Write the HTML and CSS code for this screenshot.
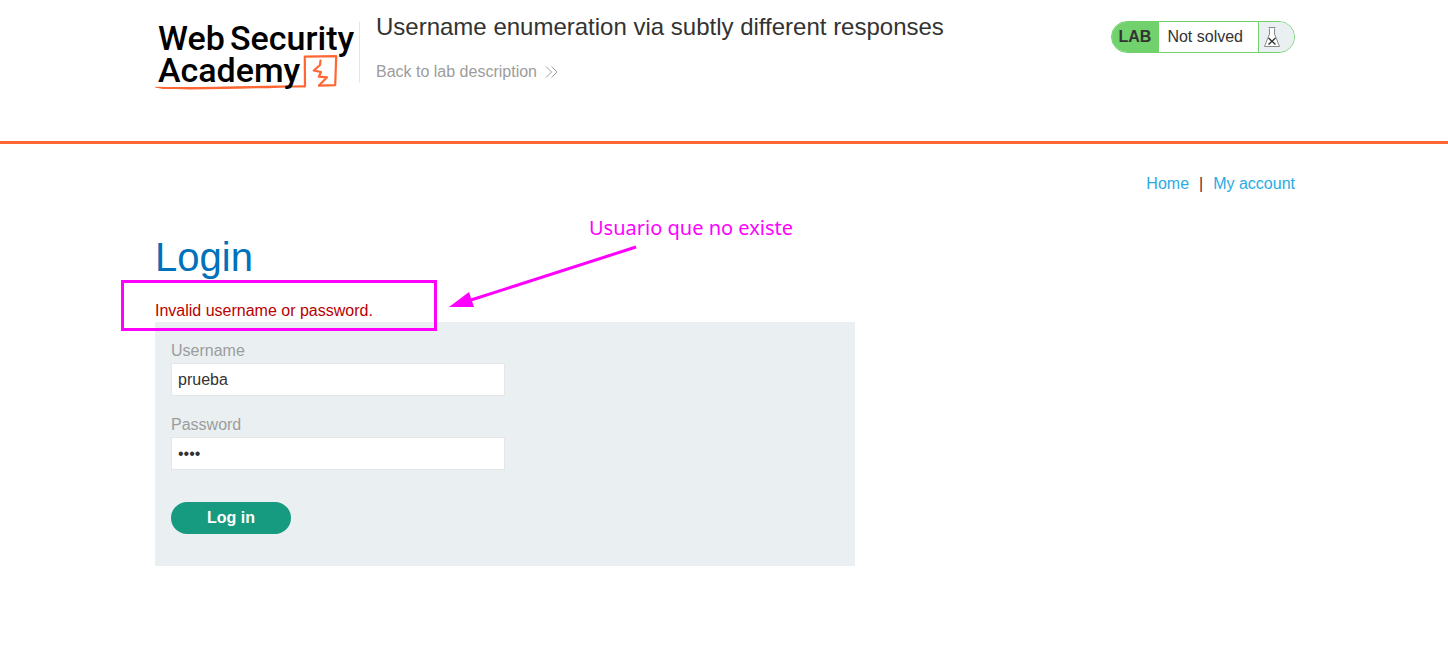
FILE: index.html
```html
<!DOCTYPE html>
<html lang="en">
<head>
<meta charset="utf-8">
<meta name="viewport" content="width=device-width, initial-scale=1">
<title>Username enumeration via subtly different responses</title>
<link rel="stylesheet" href="styles.css">
</head>
<body>
<header class="lab-header">
  <div class="container lab-header-inner">
    <a class="logo" href="#" aria-label="Web Security Academy">
      <svg width="204" height="76" viewBox="0 0 204 76">
        <path fill="#ff6633" d="M0 70.800C40 71.800 90 70 150 69.300L150 71.400C110 71.600 50 74.400 8 73L0 71.600Z"/>
        <g fill="none" stroke="#ff6633" stroke-linejoin="round" stroke-linecap="round">
          <path stroke-width="2.200" d="M150 70.300L149.800 40.700L181.200 40.200L180.200 69.200L164 69.600"/>
          <path stroke-width="2.200" d="M165.500 44.500L165 49L158.800 54.500L166 56L163.800 60.700L172 61.300L164 69.500"/>
        </g>
        <g class="logo-text">
          <text x="3" y="34">Web</text>
          <text x="75" y="34">Security</text>
          <text x="3" y="66">Academy</text>
        </g>
      </svg>
    </a>
    <div class="title-block">
      <h2 class="lab-title">Username enumeration via subtly different responses</h2>
      <a class="back-link" href="#">Back to lab description
        <svg width="13" height="12" viewBox="0 0 13 12" fill="none" stroke="#9c9c9c"><path d="M1 .5L6.500 6L1 11.500M6.500 .5L12 6L6.500 11.500"/></svg>
      </a>
    </div>
    <div class="lab-status">
      <span class="lab-tag">LAB</span>
      <span class="lab-state">Not solved</span>
      <span class="lab-flask">
        <svg width="18" height="22" viewBox="0 0 18 22" fill="none">
          <path fill="#fff" stroke="#8a8a8a" d="M6.500 2.500V8L1.500 20.500H16.500L11.500 8V2.500"/>
          <path stroke="#8a8a8a" d="M5.500 1.500H12.500"/>
          <path stroke="#333332" stroke-width="1.400" d="M5.500 12L12.500 18.500M12.500 12L5.500 18.500"/>
        </svg>
      </span>
    </div>
  </div>
</header>
<main class="container">
  <nav class="top-links">
    <a href="#">Home</a><span>|</span><a href="#">My account</a>
  </nav>
  <section class="login">
    <h1>Login</h1>
    <p class="warning">Invalid username or password.</p>
    <form class="login-form">
      <label for="username">Username</label>
      <input id="username" type="text" value="prueba">
      <label for="password">Password</label>
      <input id="password" type="password" value="1234">
      <button type="button">Log in</button>
    </form>
    <div class="highlight"></div>
    <svg class="arrow" width="190" height="64" viewBox="0 0 190 64">
      <path d="M187 3L22 56" stroke="#ff00ff" stroke-width="3"/>
      <path d="M0 63L20 48L25 63Z" fill="#ff00ff"/>
    </svg>
    <div class="note">Usuario que no existe</div>
  </section>
</main>
</body>
</html>
```
FILE: styles.css
```css
* {
  box-sizing: border-box;
}

body {
  margin: 0;
  background: #fff;
  color: #333332;
  font: 16px/24px "Liberation Sans", Arial, sans-serif;
}

.container {
  max-width: 1142px;
  margin: 0 auto;
  padding-left: 2px;
}

a {
  color: #29abe2;
  text-decoration: none;
}

.lab-header {
  min-height: 144px;
  border-bottom: 3px solid #ff6633;
}

.lab-header-inner {
  display: flex;
  align-items: flex-start;
}

.logo {
  flex: none;
  width: 204px;
  margin-top: 16px;
}

.logo svg {
  display: block;
}

.logo-text {
  fill: #000;
  font: 500 34px Roboto, sans-serif;
}

.title-block {
  flex: 1;
  height: 61px;
  margin-top: 22px;
  padding-left: 16px;
  border-left: 1px solid #e6e6e6;
}

.lab-title {
  margin: -9px 0 19px;
  font-size: 24px;
  font-weight: 400;
  line-height: 28px;
}

.back-link {
  display: inline-flex;
  align-items: center;
  gap: 8px;
  color: #9c9c9c;
}

.lab-status {
  display: flex;
  height: 32px;
  margin-top: 21px;
  overflow: hidden;
  border: 1px solid #70d16d;
  border-radius: 16px;
  line-height: 30px;
}

.lab-tag {
  padding: 0 8px 0 7px;
  background: #70d16d;
  font-weight: 700;
}

.lab-state {
  padding: 0 15px 0 8px;
}

.lab-flask {
  display: flex;
  align-items: center;
  padding: 0 13px 0 4px;
  border-left: 1px solid #70d16d;
  background: #eaeff2;
}

.top-links {
  display: flex;
  justify-content: flex-end;
  gap: 10px;
  padding-top: 28px;
}

.top-links span {
  color: #5c2430;
}

.login {
  position: relative;
  padding-top: 36px;
}

h1 {
  margin: 0;
  color: #0071bc;
  font-size: 40px;
  font-weight: 400;
  line-height: 50px;
}

.warning {
  margin: 18px 0 0;
  color: #b80000;
  line-height: 22px;
}

.login-form {
  display: flex;
  flex-direction: column;
  align-items: flex-start;
  max-width: 700px;
  padding: 16px 16px 32px;
  background: #eaf0f2;
}

.login-form label {
  padding-top: 1px;
  color: #9c9c9c;
}

.login-form input {
  width: 50%;
  height: 33px;
  margin: 0 0 16px;
  padding: 0 6px;
  border: 1px solid #e6e6e6;
  border-radius: 0;
  background: #fff;
  color: #333332;
  font: inherit;
}

.login-form button {
  width: 120px;
  height: 32px;
  margin-top: 16px;
  border: 0;
  border-radius: 16px;
  background: #179b80;
  color: #fff;
  font: inherit;
  font-weight: 700;
}

.highlight {
  position: absolute;
  top: 84px;
  left: -34px;
  width: 316px;
  height: 51px;
  border: 3px solid #ff00ff;
}

.arrow {
  position: absolute;
  top: 48px;
  left: 294px;
}

.note {
  position: absolute;
  top: 20px;
  left: 434px;
  color: #ff00ff;
  font-family: "Noto Sans", sans-serif;
  font-size: 20px;
  white-space: nowrap;
}
```
